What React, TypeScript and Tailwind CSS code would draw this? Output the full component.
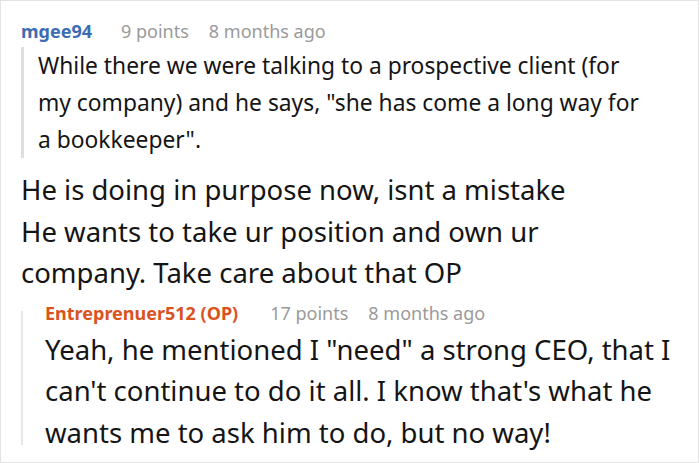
import React from 'react';

const font = { fontFamily: '"Noto Sans", "Open Sans", sans-serif' };

function Meta({ name, nameColor, points, age, gap }: { name: string; nameColor: string; points: string; age: string; gap: string }) {
  return (
    <div className="flex items-baseline text-[18px] leading-[24px] whitespace-nowrap">
      <span className={`font-bold ${nameColor}`}>{name}</span>
      <span className={`text-[#9a9a9a] ${gap}`}>{points}</span>
      <span className="text-[#9a9a9a] ml-[20px]">{age}</span>
    </div>
  );
}

export default function App() {
  return (
    <div style={font} className="w-[699px] h-[463px] bg-white border border-[#e3e3e3] pl-[20px] pt-[18px] text-[#151515] overflow-hidden">
      <Meta name="mgee94" nameColor="text-[#3c6cb4]" points="9 points" age="8 months ago" gap="ml-[29px]" />

      <div className="mt-[4px] flex">
        <div className="w-[3px] bg-[#dedede] shrink-0" />
        <p className="ml-[14px] text-[22.8px] leading-[37px] w-[612px]">
          While there we were talking to a prospective client (for my company) and he says, "she has come a long way for a bookkeeper".
        </p>
      </div>

      <p className="mt-[11px] text-[27.5px] leading-[41.5px] w-[600px]">
        He is doing in purpose now, isnt a mistake
        <br />
        He wants to take ur position and own ur company. Take care about that OP
      </p>

      <div className="mt-[7px] flex">
        <div className="w-[2px] bg-[#e6e6e6] shrink-0 mt-[10px] h-[134px]" />
        <div className="ml-[22px]">
          <Meta name="Entreprenuer512 (OP)" nameColor="text-[#d9531e]" points="17 points" age="8 months ago" gap="ml-[32px]" />
          <p className="mt-[4px] text-[27.5px] leading-[41.5px] w-[650px]">
            Yeah, he mentioned I "need" a strong CEO, that I can't continue to do it all. I know that's what he wants me to ask him to do, but no way!
          </p>
        </div>
      </div>
    </div>
  );
}
